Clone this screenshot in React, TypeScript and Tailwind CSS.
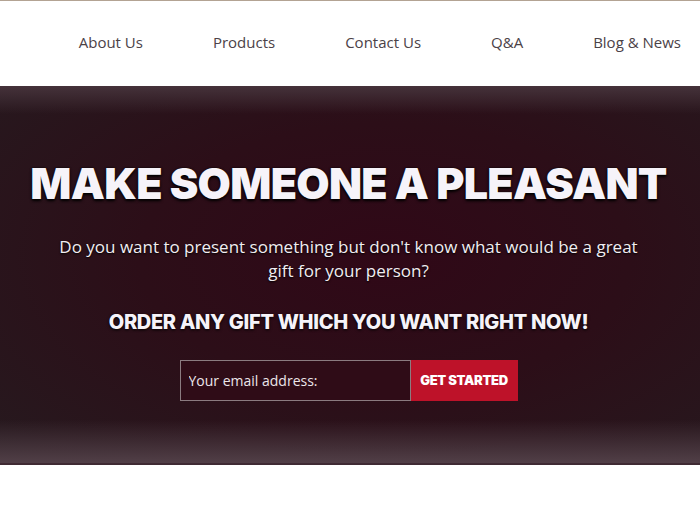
const navItems = ['About Us', 'Products', 'Contact Us', 'Q&A', 'Blog & News']

function Nav() {
  return (
    <header className="h-[86px] border-t border-[#b3a393] bg-white">
      <nav className="flex h-full items-center justify-end gap-[70px] pr-[19px] pb-[3px]">
        {navItems.map((item) => (
          <a
            key={item}
            href="#"
            className="text-[15px] font-normal text-[#4b4247] [font-family:'Open_Sans',sans-serif]"
          >
            {item}
          </a>
        ))}
      </nav>
    </header>
  )
}

function Hero() {
  return (
    <section className="relative h-[379px] overflow-hidden bg-[#2f0d18]">
      {/* background shading: dark edges, warmer centre, light haze at bottom */}
      <div className="absolute inset-0 bg-[radial-gradient(ellipse_at_55%_45%,#300817_0%,#2c0e18_45%,#261a1f_100%)]" />
      <div className="absolute inset-x-0 top-0 h-[28px] bg-gradient-to-b from-[#45323a] to-transparent" />
      <div className="absolute inset-x-0 bottom-0 h-[45px] bg-gradient-to-t from-[#534149] to-transparent" />
      <div className="absolute inset-x-0 bottom-0 h-[2px] bg-[#3f2a33]" />

      <div className="relative flex flex-col items-center pt-[69px] pr-[3px] text-center [font-family:Inter,sans-serif]">
        <h1 className="whitespace-nowrap text-[43px] leading-[56px] font-black tracking-[-0.7px] text-[#f6f3f9] [text-shadow:0_2px_3px_#000,0_0_2px_#000]">
          MAKE SOMEONE A PLEASANT
        </h1>
        <p className="mt-[24px] w-[590px] text-[17px] leading-[24px] text-[#f1edf1] [font-family:'Open_Sans',sans-serif] [text-shadow:0_1px_2px_#000]">
          Do you want to present something but don't know what would be a great gift for your person?
        </p>
        <h2 className="mt-[27px] text-[20px] leading-[24px] font-extrabold tracking-[-0.3px] text-[#f6f3f9] [text-shadow:0_1px_3px_#000]">
          ORDER ANY GIFT WHICH YOU WANT RIGHT NOW!
        </h2>
        <form className="mt-[26px] flex" onSubmit={(e) => e.preventDefault()}>
          <input
            type="email"
            placeholder="Your email address:"
            className="h-[41px] w-[231px] border border-[#8b7b80] bg-[#2f0c17] px-[8px] text-[14px] text-white outline-none placeholder:text-[#ece6ea] [font-family:'Open_Sans',sans-serif]"
          />
          <button
            type="submit"
            className="h-[41px] w-[107px] bg-[#be1229] text-[13px] font-black tracking-[-0.3px] text-white"
          >
            GET STARTED
          </button>
        </form>
      </div>
    </section>
  )
}

export default function App() {
  return (
    <div className="min-h-[525px] bg-white">
      <Nav />
      <Hero />
    </div>
  )
}
